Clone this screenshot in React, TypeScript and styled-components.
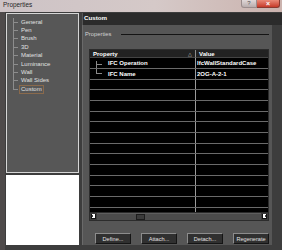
import React from 'react';
import styled, { createGlobalStyle } from 'styled-components';

const Global = createGlobalStyle`
  html, body { margin: 0; padding: 0; background: #3d3d3d; }
  body { font-family: "Liberation Sans", Arial, sans-serif; }
  * { box-sizing: border-box; }
`;

const Window = styled.div`
  width: 282px;
  height: 250px;
  overflow: hidden;
  display: flex;
  flex-direction: column;
  background: #3c3c3c;
`;

const TitleBar = styled.div`
  height: 12px;
  flex: none;
  display: flex;
  align-items: flex-start;
  background: linear-gradient(90deg, #cdc3c6 0%, #d5c9c8 55%, #cbb3ae 100%);
`;

const Title = styled.span`
  font-size: 6.4px;
  line-height: 8px;
  color: #262626;
  margin: 1px 0 0 3px;
`;

const CaptionButtons = styled.div`
  margin-left: auto;
  margin-right: 2px;
  display: flex;
`;

const HelpBtn = styled.div`
  width: 16px;
  height: 8px;
  border: 1px solid #9a8c8c;
  border-top: none;
  border-radius: 0 0 0 3px;
  background: linear-gradient(#e0d8d8, #b9adad);
  color: #555;
  font-size: 6px;
  line-height: 7px;
  text-align: center;
`;

const CloseBtn = styled.div`
  width: 23px;
  height: 8px;
  border: 1px solid #8a3a30;
  border-top: none;
  border-left: none;
  border-radius: 0 0 3px 0;
  background: linear-gradient(#ea8a78, #c63b2a);
  color: #fff;
  font-size: 7px;
  font-weight: bold;
  line-height: 7px;
  text-align: center;
`;

const Body = styled.div`
  flex: 1;
  display: flex;
  padding: 1px 0 5px 6px;
  gap: 3px;
  background: linear-gradient(90deg, #4e4a4a 0, #4e4a4a 5px, #3d3d3d 5px);
`;

const LeftCol = styled.div`
  width: 73px;
  flex: none;
  display: flex;
  flex-direction: column;
  gap: 2px;
`;

const TreeBox = styled.div`
  height: 160px;
  flex: none;
  border: 1px solid #d6d6d6;
  background: #575757;
  padding: 4px 0 0 6px;
`;

const TreeList = styled.div`
  background: linear-gradient(#8c8c8c, #8c8c8c) no-repeat 0 0 / 1px calc(100% - 4px);
`;

const TreeItem = styled.div`
  display: flex;
  align-items: center;
  height: 8.375px;
`;

const Tick = styled.span`
  width: 5px;
  height: 1px;
  flex: none;
  background: #8c8c8c;
`;

const TreeLabel = styled.span<{ $selected?: boolean }>`
  font-size: 6px;
  line-height: 7px;
  color: #e0e0e0;
  margin-left: 1px;
  padding: 0 1px;
  border: 1px solid ${(p) => (p.$selected ? '#8a6a4c' : 'transparent')};
`;

const WhiteBox = styled.div`
  flex: 1;
  background: #ffffff;
`;

const RightCol = styled.div`
  flex: 1;
  display: flex;
  flex-direction: column;
`;

const SectionHeader = styled.div`
  height: 12px;
  flex: none;
  background: #2b2b2b;
  color: #ffffff;
  font-weight: bold;
  font-size: 6.2px;
  line-height: 10px;
  padding-left: 1px;
  border-left: 1px solid #555;
`;

const Panel = styled.div`
  width: 190px;
  flex: 1;
  background: #565656;
  display: flex;
  flex-direction: column;
  border-left: 1px solid #6a6a6a;
`;

const GroupRow = styled.div`
  display: flex;
  align-items: center;
  height: 8px;
  margin: 5px 3px 0 2px;
`;

const GroupLabel = styled.span`
  font-size: 5.8px;
  color: #d2d2d2;
`;

const GroupLine = styled.div`
  flex: 1;
  height: 1px;
  background: #141414;
  margin-left: 10px;
`;

const Table = styled.div`
  margin: 11px 0 0 6px;
  width: 180px;
  height: 172px;
  background: #000;
  border: 1px solid #2c2c2c;
  display: flex;
  flex-direction: column;
  overflow: hidden;
`;

const HeaderRow = styled.div`
  display: grid;
  grid-template-columns: 106px 1fr;
  height: 8.4px;
  flex: none;
  background: #222;
`;

const HeadCell = styled.div<{ $divider?: boolean }>`
  display: flex;
  align-items: center;
  padding-left: 3px;
  padding-right: 3px;
  color: #fff;
  font-weight: bold;
  font-size: 6px;
  border-right: ${(p) => (p.$divider ? '1px solid #8e8e8e' : 'none')};
  border-bottom: 1px solid #444;
`;

const SortGlyph = styled.span`
  margin-left: auto;
  font-size: 5px;
  color: #ccc;
  font-weight: normal;
`;

const Rows = styled.div`
  flex: 1;
  overflow: hidden;
`;

const Row = styled.div`
  display: grid;
  grid-template-columns: 106px 1fr;
  height: 10.67px;
  border-bottom: 1px solid #6a6a6a;
`;

const Cell = styled.div<{ $divider?: boolean }>`
  display: flex;
  align-items: center;
  color: #fff;
  font-weight: bold;
  font-size: 6px;
  white-space: nowrap;
  overflow: hidden;
  padding-left: 1px;
  border-right: ${(p) => (p.$divider ? '1px solid #9a9a9a' : 'none')};
`;

const Connector = styled.span<{ $first?: boolean; $last?: boolean }>`
  width: 6px;
  margin-left: 5px;
  margin-right: 6px;
  flex: none;
  border-left: 1px solid #8a8a8a;
  background: linear-gradient(#8a8a8a, #8a8a8a) no-repeat 0 ${(p) => (p.$last ? '100%' : '50%')} / 100% 1px;
  align-self: ${(p) => (p.$first ? 'flex-end' : 'flex-start')};
  height: ${(p) => (p.$first ? '75%' : p.$last ? '55%' : '100%')};
  ${(p) => (p.$first ? 'background-position: 0 3px;' : '')}
`;

const ScrollBar = styled.div`
  height: 8.4px;
  flex: none;
  display: flex;
  background: #4b4b4b;
  border-top: 1px solid #2a2a2a;
`;

const ScrollBtn = styled.div`
  width: 7px;
  flex: none;
  background: #121212;
  border: 1px solid #3a3a3a;
  display: flex;
  align-items: center;
  justify-content: center;
`;

const Track = styled.div`
  flex: 1;
  display: flex;
  padding-left: 39px;
  border-top: 1px solid #5e5e5e;
`;

const Thumb = styled.div`
  width: 9px;
  background: #3a3a3a;
  border: 1px solid #1c1c1c;
`;

const ButtonRow = styled.div`
  display: flex;
  justify-content: space-between;
  margin: 12px 3px 0 12px;
`;

const Button = styled.div`
  width: 36px;
  height: 11.3px;
  background: #303030;
  border: 1px solid;
  border-color: #8c8c8c #151515 #151515 #8c8c8c;
  color: #e2e2e2;
  font-size: 5.6px;
  display: flex;
  align-items: center;
  justify-content: center;
`;

const Arrow = ({ dir }: { dir: 'l' | 'r' }) => (
  <svg width="3" height="4" viewBox="0 0 3 4">
    <rect x="0" y="0" width="3" height="4" fill="#fff" />
    <rect x={dir === 'l' ? 0 : 2} y="1" width="1" height="2" fill="#444" />
  </svg>
);

const treeItems = ['General', 'Pen', 'Brush', '3D', 'Material', 'Luminance', 'Wall', 'Wall Sides', 'Custom'];

const data = [
  { name: 'IFC Operation', value: 'IfcWallStandardCase' },
  { name: 'IFC Name', value: '2OG-A-2-1' },
];

export default function App() {
  const emptyRows = Array.from({ length: 14 });
  return (
    <>
      <Global />
      <Window>
        <TitleBar>
          <Title>Properties</Title>
          <CaptionButtons>
            <HelpBtn>?</HelpBtn>
            <CloseBtn>×</CloseBtn>
          </CaptionButtons>
        </TitleBar>
        <Body>
          <LeftCol>
            <TreeBox>
              <TreeList>
                {treeItems.map((t) => (
                  <TreeItem key={t}>
                    <Tick />
                    <TreeLabel $selected={t === 'Custom'}>{t}</TreeLabel>
                  </TreeItem>
                ))}
              </TreeList>
            </TreeBox>
            <WhiteBox />
          </LeftCol>
          <RightCol>
            <SectionHeader>Custom</SectionHeader>
            <Panel>
              <GroupRow>
                <GroupLabel>Properties</GroupLabel>
                <GroupLine />
              </GroupRow>
              <Table>
                <HeaderRow>
                  <HeadCell $divider>
                    Property<SortGlyph>△</SortGlyph>
                  </HeadCell>
                  <HeadCell>Value</HeadCell>
                </HeaderRow>
                <Rows>
                  {data.map((d, i) => (
                    <Row key={d.name}>
                      <Cell $divider>
                        <Connector $first={i === 0} $last={i === data.length - 1} />
                        {d.name}
                      </Cell>
                      <Cell>{d.value}</Cell>
                    </Row>
                  ))}
                  {emptyRows.map((_, i) => (
                    <Row key={i}>
                      <Cell $divider />
                      <Cell />
                    </Row>
                  ))}
                </Rows>
                <ScrollBar>
                  <ScrollBtn>
                    <Arrow dir="l" />
                  </ScrollBtn>
                  <Track>
                    <Thumb />
                  </Track>
                  <ScrollBtn>
                    <Arrow dir="r" />
                  </ScrollBtn>
                </ScrollBar>
              </Table>
              <ButtonRow>
                <Button>Define...</Button>
                <Button>Attach...</Button>
                <Button>Detach...</Button>
                <Button>Regenerate</Button>
              </ButtonRow>
            </Panel>
          </RightCol>
        </Body>
      </Window>
    </>
  );
}
